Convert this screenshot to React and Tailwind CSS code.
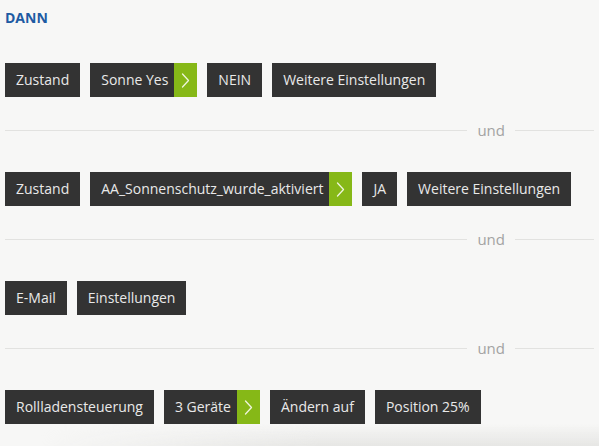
import React from "react";

function Chevron() {
  return (
    <svg width="9" height="15" viewBox="0 0 9 15" fill="none">
      <path d="M1.5 1 L7.5 7.5 L1.5 14" stroke="#eef5dc" strokeWidth="1.3" strokeLinecap="round" strokeLinejoin="round" />
    </svg>
  );
}

function Box({ children, arrow }) {
  if (arrow) {
    return (
      <div className="flex h-[34px] bg-[#333333] text-[#e9e9e9]">
        <span className="flex items-center pl-[11px] pr-[6px]">{children}</span>
        <span className="flex w-[23px] items-center justify-center bg-[#86b817]">
          <Chevron />
        </span>
      </div>
    );
  }
  return (
    <div className="flex h-[34px] items-center bg-[#333333] px-[11px] text-[#e9e9e9]">{children}</div>
  );
}

function Separator() {
  return (
    <div className="mt-[23px] flex h-[20px] items-center">
      <div className="h-px flex-1 bg-[#e2e2e0]" />
      <span className="px-[10px] text-[15px] leading-[20px] text-[#a3a3a3]">und</span>
      <div className="h-px w-[79px] bg-[#e2e2e0]" />
    </div>
  );
}

function Row({ items }) {
  return (
    <div className="flex gap-[10px] text-[14px] leading-[20px]">
      {items.map((it, i) => (
        <Box key={i} arrow={it.arrow}>
          {it.t}
        </Box>
      ))}
    </div>
  );
}

export default function App() {
  const rows = [
    [{ t: "Zustand" }, { t: "Sonne Yes", arrow: true }, { t: "NEIN" }, { t: "Weitere Einstellungen" }],
    [{ t: "Zustand" }, { t: "AA_Sonnenschutz_wurde_aktiviert", arrow: true }, { t: "JA" }, { t: "Weitere Einstellungen" }],
    [{ t: "E-Mail" }, { t: "Einstellungen" }],
    [{ t: "Rollladensteuerung" }, { t: "3 Geräte", arrow: true }, { t: "Ändern auf" }, { t: "Position 25%" }],
  ];
  return (
    <div
      className="relative flex h-[446px] w-full flex-col overflow-hidden bg-[#f7f7f6]"
      style={{ fontFamily: '"Open Sans", "Noto Sans", sans-serif' }}
    >
      <div className="px-[5px]">
        <div className="pt-[8px] text-[14px] font-bold leading-[20px] text-[#1e5ba3]">DANN</div>
        <div className="mt-[35px]">
          <Row items={rows[0]} />
          <Separator />
        </div>
        <div className="mt-[32px]">
          <Row items={rows[1]} />
          <Separator />
        </div>
        <div className="mt-[32px]">
          <Row items={rows[2]} />
          <Separator />
        </div>
        <div className="mt-[32px]">
          <Row items={rows[3]} />
        </div>
      </div>
      <div className="h-[22px] w-full bg-[linear-gradient(to_bottom,rgba(230,230,228,0),#e6e6e4)] [mask-image:linear-gradient(to_right,transparent_40px,black_320px)]" />
    </div>
  );
}
